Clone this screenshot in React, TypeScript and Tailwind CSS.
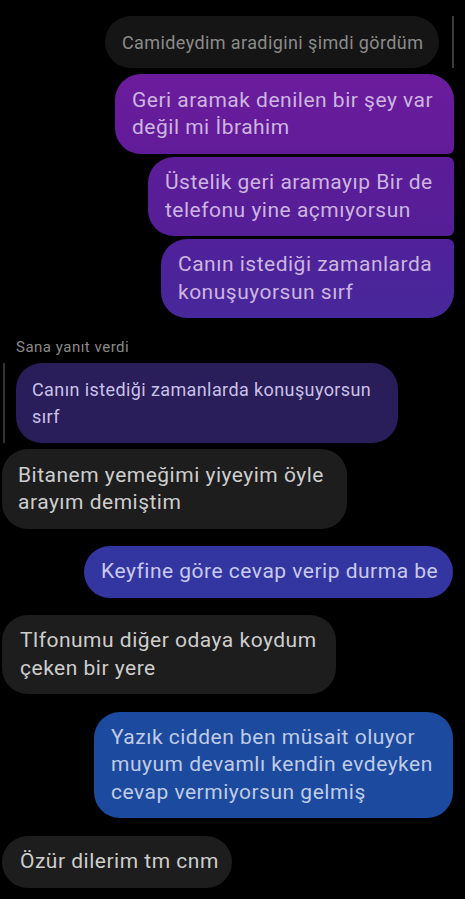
import React from "react";

type Side = "in" | "out";

interface BubbleProps {
  text: React.ReactNode;
  className?: string;
}

// single chat bubble, width and colours come from the caller
const Bubble = ({ text, className = "" }: BubbleProps) => (
  <div className={`flex items-center ${className}`}>
    <p className="leading-[27.5px]">{text}</p>
  </div>
);

const messages: { side: Side; text: string; cls: string }[] = [
  {
    side: "in",
    text: "Bitanem yemeğimi yiyeyim öyle arayım demiştim",
    cls: "mt-[6px] ml-[2px] w-[345px] h-[80px] pl-[16px] pr-2 rounded-[26px] bg-[#1d1d1d] text-[#cdcdcd]",
  },
  {
    side: "out",
    text: "Keyfine göre cevap verip durma be",
    cls: "mt-[17px] mr-[12px] w-[369px] h-[52px] pl-[17px] rounded-[26px] bg-[#3336a0] text-[#c8c9ee]",
  },
  {
    side: "in",
    text: "Tlfonumu diğer odaya koydum çeken bir yere",
    cls: "mt-[17px] ml-[2px] w-[334px] h-[79px] pl-[18px] pr-2 rounded-[26px] bg-[#1d1d1d] text-[#cdcdcd]",
  },
  {
    side: "out",
    text: "Yazık cidden ben müsait oluyor muyum devamlı kendin evdeyken cevap vermiyorsun gelmiş",
    cls: "mt-[18px] mr-[12px] w-[359px] h-[106px] pl-[17px] pr-2 rounded-[26px] bg-[#1b4a9e] text-[#c0cbe6]",
  },
  {
    side: "in",
    text: "Özür dilerim tm cnm",
    cls: "mt-[18px] ml-[2px] w-[230px] h-[52px] pl-[18px] rounded-[26px] bg-[#1d1d1d] text-[#cdcdcd]",
  },
];

export default function App() {
  return (
    <div
      className="w-[465px] h-[899px] overflow-hidden bg-black flex flex-col text-[21px] tracking-[0.5px]"
      style={{ fontFamily: "Roboto, 'Noto Sans', sans-serif" }}
    >
      {/* quoted message at the top */}
      <div className="mt-[16px] flex justify-end items-stretch pr-[11px]">
        <div className="w-[334px] h-[52px] rounded-[26px] bg-[#151515] flex items-center pl-[17px]">
          <span className="text-[18px] tracking-[0.4px] text-[#8b8b8b]">Camideydim aradigini şimdi gördüm</span>
        </div>
        <div className="ml-[13px] w-[2px] bg-[#3a3a3a]" />
      </div>

      {/* grouped purple messages */}
      <div className="mt-[6px] flex flex-col items-end gap-[3px] pr-[11px] text-[#ccb5e0]">
        <Bubble
          text="Geri aramak denilen bir şey var değil mi İbrahim"
          className="w-[339px] h-[80px] pl-[17px] pr-2 rounded-[26px] rounded-br-[6px] bg-gradient-to-b from-[#6b1c9c] to-[#611b99]"
        />
        <Bubble
          text="Üstelik geri aramayıp Bir de telefonu yine açmıyorsun"
          className="w-[306px] h-[79px] pl-[17px] pr-2 rounded-l-[26px] rounded-r-[6px] bg-gradient-to-b from-[#5d1c98] to-[#541e97]"
        />
        <Bubble
          text="Canın istediği zamanlarda konuşuyorsun sırf"
          className="w-[293px] h-[79px] pl-[17px] pr-2 rounded-[26px] rounded-tr-[6px] bg-gradient-to-b from-[#50209a] to-[#47289a]"
        />
      </div>

      {/* reply label + quoted bubble */}
      <div className="mt-[21px] pl-[16px] h-[17px] text-[15px] tracking-[0.5px] leading-[17px] text-[#8a8a8a]">
        Sana yanıt verdi
      </div>
      <div className="mt-[7px] flex items-stretch">
        <div className="ml-[3px] w-[2px] bg-[#333333]" />
        <div className="ml-[11px] w-[382px] h-[80px] pl-[16px] pr-2 rounded-[26px] bg-[#291d5a] text-[#c9c1e8] text-[18px] tracking-[0.4px] flex items-center">
          <p className="leading-[27px]">Canın istediği zamanlarda konuşuyorsun sırf</p>
        </div>
      </div>

      {messages.map((m, i) => (
        <div key={i} className={`flex ${m.side === "out" ? "justify-end" : "justify-start"}`}>
          <Bubble text={m.text} className={m.cls} />
        </div>
      ))}
    </div>
  );
}
